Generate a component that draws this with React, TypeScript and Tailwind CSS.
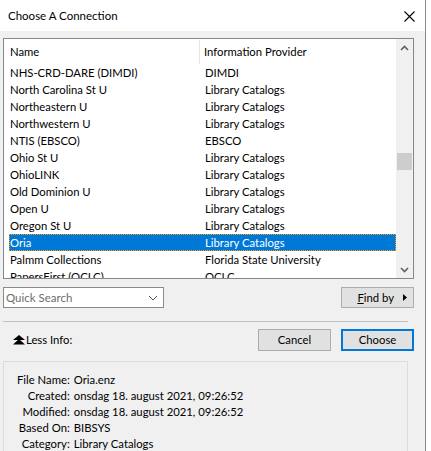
import React from "react";

type Row = { name: string; provider: string };

const rows: Row[] = [
  { name: "NHS-CRD-DARE (DIMDI)", provider: "DIMDI" },
  { name: "North Carolina St U", provider: "Library Catalogs" },
  { name: "Northeastern U", provider: "Library Catalogs" },
  { name: "Northwestern U", provider: "Library Catalogs" },
  { name: "NTIS (EBSCO)", provider: "EBSCO" },
  { name: "Ohio St U", provider: "Library Catalogs" },
  { name: "OhioLINK", provider: "Library Catalogs" },
  { name: "Old Dominion U", provider: "Library Catalogs" },
  { name: "Open U", provider: "Library Catalogs" },
  { name: "Oregon St U", provider: "Library Catalogs" },
  { name: "Oria", provider: "Library Catalogs" },
  { name: "Palmm Collections", provider: "Florida State University" },
  { name: "PapersFirst (OCLC)", provider: "OCLC" },
];

const details: [string, string][] = [
  ["File Name:", "Oria.enz"],
  ["Created:", "onsdag 18. august 2021, 09:26:52"],
  ["Modified:", "onsdag 18. august 2021, 09:26:52"],
  ["Based On:", "BIBSYS"],
  ["Category:", "Library Catalogs"],
];

const font = { fontFamily: 'Lato, "Noto Sans", sans-serif' };

function Chevron({ dir }: { dir: "up" | "down" }) {
  return (
    <svg width="9" height="6" viewBox="0 0 9 6" className="block">
      {dir === "up" ? (
        <path d="M1 5 L4.5 1.5 L8 5" fill="none" stroke="#606060" strokeWidth="1.6" />
      ) : (
        <path d="M1 1 L4.5 4.5 L8 1" fill="none" stroke="#606060" strokeWidth="1.6" />
      )}
    </svg>
  );
}

function DoubleUp() {
  return (
    <svg width="12" height="10" viewBox="0 0 12 10" className="block">
      <path d="M6 0 L12 5 L0 5 Z" fill="#000" />
      <path d="M6 4 L12 9.5 L0 9.5 Z" fill="#000" />
    </svg>
  );
}

export default function App() {
  return (
    <div className="w-[431px] h-[451px] bg-white overflow-hidden text-[11.3px] text-black leading-none" style={font}>
      <div className="w-[426px] h-[451px] border-r border-[#8a8a8a] flex flex-col">
        {/* title bar */}
        <div className="h-[31px] bg-white flex items-center justify-between pl-[8px] pr-[10px] pt-px shrink-0">
          <span className="text-[11.5px]">Choose A Connection</span>
          <svg width="11" height="11" viewBox="0 0 11 11">
            <path d="M0.5 0.5 L10.5 10.5 M10.5 0.5 L0.5 10.5" stroke="#000" strokeWidth="1.1" />
          </svg>
        </div>

        {/* dialog body */}
        <div className="flex-1 bg-[#f0f0f0] pl-[3px] pr-[11px] pt-[7px] flex flex-col">
          {/* connection list */}
          <div className="h-[241px] border border-[#828790] bg-white flex shrink-0">
            <div className="flex-1 overflow-hidden">
              <div className="h-[25px] flex items-center pt-px">
                <div className="w-[196px] pl-[6px] h-full flex items-center border-r border-[#e5e5e5]">Name</div>
                <div className="pl-[4px]">Information Provider</div>
              </div>
              {rows.map((r, i) => {
                const sel = r.name === "Oria";
                return (
                  <div
                    key={i}
                    className={
                      sel
                        ? "h-[17px] ml-[5px] flex items-center pt-px bg-[#0078d7] text-white outline outline-1 outline-dotted outline-[#ff9c00] -outline-offset-1"
                        : "h-[17px] ml-[5px] flex items-center pt-px"
                    }
                  >
                    <div className="w-[196px] pl-[1px] whitespace-nowrap">{r.name}</div>
                    <div className="whitespace-nowrap">{r.provider}</div>
                  </div>
                );
              })}
            </div>
            {/* vertical scrollbar */}
            <div className="w-[17px] bg-[#f0f0f0] flex flex-col">
              <div className="h-[17px] flex items-center justify-center">
                <Chevron dir="up" />
              </div>
              <div className="flex-1 flex flex-col pt-[97px]">
                <div className="h-[17px] mx-[1px] bg-[#cdcdcd]" />
              </div>
              <div className="h-[17px] flex items-center justify-center">
                <Chevron dir="down" />
              </div>
            </div>
          </div>

          {/* search row */}
          <div className="mt-[8px] flex items-center justify-between h-[21px]">
            <div className="w-[161px] h-[21px] border border-[#8a8a8a] bg-white flex items-center justify-between pl-[2px] pr-[5px]">
              <span className="text-[#6d6d6d] text-[11.5px]">Quick Search</span>
              <svg width="10" height="6" viewBox="0 0 10 6">
                <path d="M1 1 L5 5 L9 1" fill="none" stroke="#555" strokeWidth="1" />
              </svg>
            </div>
            <div className="w-[73px] h-[21px] border border-[#adadad] bg-[#e1e1e1] flex items-center justify-end pr-[6px] gap-[9px]">
              <span>
                <span className="underline">F</span>ind by
              </span>
              <svg width="4" height="7" viewBox="0 0 4 7">
                <path d="M0 0 L4 3.5 L0 7 Z" fill="#000" />
              </svg>
            </div>
          </div>

          {/* separator */}
          <div className="mt-[13px] h-px bg-[#c0c0c0] mr-[6px]" />

          {/* less info + buttons */}
          <div className="mt-[7px] flex items-center h-[22px]">
            <div className="pl-[10px] flex items-center gap-[1px]">
              <DoubleUp />
              <span>Less Info:</span>
            </div>
            <div className="ml-auto flex gap-[10px] items-center">
              <div className="w-[73px] h-[22px] border border-[#adadad] bg-[#e1e1e1] flex items-center justify-center">Cancel</div>
              <div className="w-[73px] h-[22px] border-2 border-[#0078d7] bg-[#e1e1e1] flex items-center justify-center">Choose</div>
            </div>
          </div>

          {/* details panel */}
          <div className="mt-[10px] mr-[6px] flex-1 border border-[#dcdcdc] border-b-0 pt-[12px] pl-[13px]">
            <div className="grid grid-cols-[auto_1fr] gap-x-[4px] gap-y-[4px]">
              {details.map(([k, v]) => (
                <React.Fragment key={k}>
                  <div className="text-right whitespace-nowrap h-[12px]">{k}</div>
                  <div className="whitespace-nowrap h-[12px]">{v}</div>
                </React.Fragment>
              ))}
            </div>
          </div>
        </div>
      </div>
    </div>
  );
}
